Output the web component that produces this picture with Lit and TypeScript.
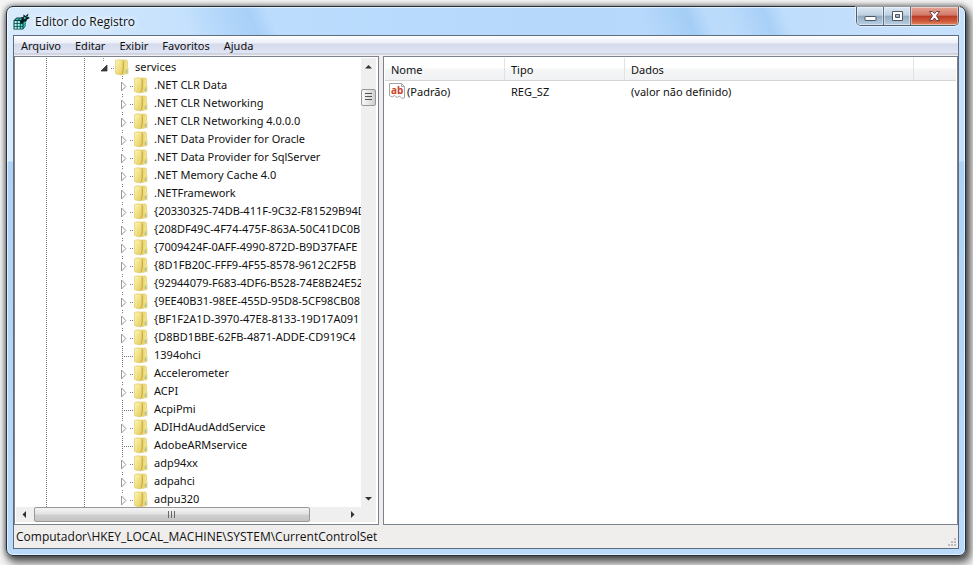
import { LitElement, html, css, svg, nothing } from "lit";
import { customElement, property } from "lit/decorators.js";

type NodeKind = "open" | "closed" | "leaf";

interface TreeNode {
  label: string;
  kind: NodeKind;
}

const branch = (label: string): TreeNode => ({ label, kind: "closed" });
const leaf = (label: string): TreeNode => ({ label, kind: "leaf" });

const SERVICES: TreeNode[] = [
  branch(".NET CLR Data"),
  branch(".NET CLR Networking"),
  branch(".NET CLR Networking 4.0.0.0"),
  branch(".NET Data Provider for Oracle"),
  branch(".NET Data Provider for SqlServer"),
  branch(".NET Memory Cache 4.0"),
  branch(".NETFramework"),
  branch("{20330325-74DB-411F-9C32-F81529B94D"),
  branch("{208DF49C-4F74-475F-863A-50C41DC0B"),
  branch("{7009424F-0AFF-4990-872D-B9D37FAFE"),
  branch("{8D1FB20C-FFF9-4F55-8578-9612C2F5B"),
  branch("{92944079-F683-4DF6-B528-74E8B24E52"),
  branch("{9EE40B31-98EE-455D-95D8-5CF98CB08"),
  branch("{BF1F2A1D-3970-47E8-8133-19D17A091"),
  branch("{D8BD1BBE-62FB-4871-ADDE-CD919C4"),
  leaf("1394ohci"),
  branch("Accelerometer"),
  branch("ACPI"),
  leaf("AcpiPmi"),
  branch("ADIHdAudAddService"),
  leaf("AdobeARMservice"),
  branch("adp94xx"),
  branch("adpahci"),
  branch("adpu320"),
];

const MENUS = ["Arquivo", "Editar", "Exibir", "Favoritos", "Ajuda"];

@customElement("tree-row")
class TreeRow extends LitElement {
  @property() label = "";
  @property() kind: NodeKind = "closed";
  @property({ type: Boolean }) nested = false;

  static styles = css`
    :host {
      display: flex;
      height: 18px;
      align-items: center;
      white-space: nowrap;
    }
    svg {
      display: block;
      flex: none;
    }
    .label {
      margin-left: 6px;
      line-height: 18px;
    }
  `;

  private guide(line: boolean) {
    return html`<svg width="19" height="18" aria-hidden="true">
      ${line
        ? svg`<path d="M7.5 0V18" stroke="#777" stroke-dasharray="1 1"/>`
        : nothing}
    </svg>`;
  }

  private joint() {
    if (this.kind === "open") {
      return html`<svg width="19" height="18" aria-hidden="true">
        <path d="M7.5 0V3M15 10.5h4" stroke="#888" stroke-dasharray="1 1" />
        <path d="M5 13L11 7V13Z" fill="#404040" stroke="#222" stroke-width=".7" />
      </svg>`;
    }
    if (this.kind === "leaf") {
      return html`<svg width="19" height="18" aria-hidden="true">
        <path d="M7.5 0V18M9 10.5H19" stroke="#777" stroke-dasharray="1 1" />
      </svg>`;
    }
    return html`<svg width="19" height="18" aria-hidden="true">
      <path d="M7.5 0V3M15 10.5h4" stroke="#777" stroke-dasharray="1 1" />
      <path d="M6.5 6L10.8 10.500L6.500 15Z" fill="#fff" stroke="#989898" />
    </svg>`;
  }

  private folder() {
    return html`<svg width="14" height="18" viewBox="0 0 14 18" aria-hidden="true">
      <defs>
        <linearGradient id="front" x1="0" x2="1" y1="0" y2="1">
          <stop offset="0" stop-color="#fdf6b4" />
          <stop offset="1" stop-color="#e4ca58" />
        </linearGradient>
        <linearGradient id="back" x1="0" x2="1">
          <stop offset="0" stop-color="#e0c757" />
          <stop offset="1" stop-color="#f6ea96" />
        </linearGradient>
      </defs>
      <path d="M6 3L7 2H11.500L12.500 3V9L13 10V15.500L8 16.500Z" fill="url(#back)" stroke="#dcc462" stroke-width=".6" />
      <path d="M10.800 11.500h1.600v3.500h-1.600z" fill="#7fa8a0" opacity=".6" />
      <path d="M.5 2.500Q3 1.600 5.500 1.800L8 3.200V12L6.500 17Q3 16.600.5 15.500Z" fill="url(#front)" stroke="#dcc55e" stroke-width=".6" />
      <path d="M8.300 3.500V12L7 16.700" fill="none" stroke="#bd9a36" stroke-width=".7" />
    </svg>`;
  }

  render() {
    const guides = this.nested
      ? [false, true, false, true, false]
      : [false, true, false, true];
    return html`
      ${guides.map((on) => this.guide(on))}${this.joint()}${this.folder()}
      <span class="label">${this.label}</span>
    `;
  }
}

@customElement("tree-view")
class TreeView extends LitElement {
  static styles = css`
    :host {
      display: block;
      min-width: 0;
      min-height: 0;
      overflow: hidden;
    }
    tree-row {
      margin-left: 4px;
    }
  `;

  render() {
    return html`
      <tree-row role="treeitem" aria-expanded="true" label="services" kind="open"></tree-row>
      ${SERVICES.map(
        (n) => html`<tree-row role="treeitem" label=${n.label} kind=${n.kind} nested></tree-row>`
      )}
    `;
  }
}

@customElement("app-root")
class AppRoot extends LitElement {
  static styles = css`
    :host {
      display: flex;
      box-sizing: border-box;
      height: 100vh;
      min-height: 320px;
      padding: 6px 7px 9px 6px;
      overflow: hidden;
      background: #f4f4f4;
      font-family: "Noto Sans", "Open Sans", sans-serif;
      font-size: 11px;
      color: #111;
    }
    button {
      font: inherit;
      color: inherit;
      border: 0;
      padding: 0;
      margin: 0;
      background: none;
    }
    svg {
      display: block;
    }
    .window {
      flex: 1;
      min-width: 0;
      display: flex;
      flex-direction: column;
      box-sizing: border-box;
      padding: 0 6px 6px;
      border: 1px solid #22303c;
      border-radius: 7px;
      background:
        linear-gradient(68deg, transparent 19%, #a8d0f8 26%, transparent 28%, transparent 66%, #a4cef6 71%, transparent 73%, transparent 75%, #a8d0f7 79%, transparent 81%) 0 0 / 100% 29px no-repeat,
        linear-gradient(transparent 154px, #aed2f6 155px, #b9dafa) 0 0 / 100% 100% no-repeat,
        linear-gradient(90deg, #d9ebfc, #bbdcfd 28%, #b5d8fb 60%, #c7e1fc);
      box-shadow:
        inset 0 0 0 1px rgba(255, 255, 255, 0.6),
        0 0 5px 1px rgba(0, 0, 0, 0.4),
        3px 5px 9px 2px rgba(0, 0, 0, 0.6);
    }
    .title {
      flex: none;
      height: 28px;
      display: flex;
      align-items: flex-start;
    }
    .caption {
      display: flex;
      align-items: center;
      gap: 5px;
      flex: 1;
      height: 28px;
      margin: 0;
      font-size: 12px;
      font-weight: 400;
      font-family: "Open Sans", "Noto Sans", sans-serif;
      text-shadow: 0 0 6px #fff, 0 0 6px #fff;
    }
    .controls {
      display: flex;
      height: 19px;
      box-sizing: border-box;
      border: 1px solid #4d5f70;
      border-top: 0;
      border-radius: 0 0 5px 5px;
      overflow: hidden;
      box-shadow: 0 0 0 1px rgba(255, 255, 255, 0.5);
    }
    .controls button {
      width: 27px;
      display: flex;
      align-items: center;
      justify-content: center;
      background: linear-gradient(#dce8f4, #bfd0e1 46%, #93a9bf 50%, #b9cfe4);
      border-right: 1px solid #5d6f80;
      box-shadow: inset 0 0 0 1px rgba(255, 255, 255, 0.45);
    }
    .controls .close {
      width: 47px;
      border-right: 0;
      background: linear-gradient(#e6a797, #d27767 46%, #b93822 50%, #cf5c3c 80%, #e08b62);
    }
    .client {
      flex: 1;
      min-height: 0;
      display: flex;
      flex-direction: column;
      border: 1px solid #5e6c7d;
      background: #f0eeed;
    }
    .menu {
      flex: none;
      display: flex;
      height: 20px;
      box-sizing: border-box;
      background: linear-gradient(#fff, #eceff8 7px, #d6dbec 8px, #e0e5f5 17px, #b9bfd0 18px, #f0f0f0 19px);
    }
    .menu button {
      padding: 0 7px;
      line-height: 20px;
    }
    .panes {
      flex: 1;
      min-height: 0;
      display: grid;
      grid-template-columns: 365px minmax(0, 1fr);
      grid-template-rows: minmax(0, 1fr);
      column-gap: 4px;
    }
    .pane {
      box-sizing: border-box;
      border: 1px solid #7c828c;
      background: #fff;
    }
    .tree {
      display: grid;
      grid-template-columns: minmax(0, 1fr) 15px;
      grid-template-rows: minmax(0, 1fr) 15px;
      padding: 1px 2px 2px 1px;
    }
    .bar {
      display: flex;
      background: #efefef;
    }
    .bar button {
      display: flex;
      align-items: center;
      justify-content: center;
    }
    .vertical {
      flex-direction: column;
    }
    .vertical button {
      height: 17px;
    }
    .horizontal {
      grid-column: 1 / -1;
      padding-right: 15px;
    }
    .horizontal button {
      width: 17px;
    }
    .room {
      flex: 1;
    }
    .thumb {
      box-sizing: border-box;
      display: flex;
      align-items: center;
      justify-content: center;
      border: 1px solid #989898;
      border-radius: 2px;
    }
    .vertical .thumb {
      height: 17px;
      margin-top: 14px;
      background: linear-gradient(90deg, #f6f6f6, #e6e6e6 50%, #cfcfcf);
    }
    .horizontal .thumb {
      width: 80%;
      margin-left: 1px;
      background: linear-gradient(#f4f4f4, #e3e3e3 48%, #d0d0d0 52%, #c4c4c4);
    }
    .values {
      padding: 1px;
      overflow: hidden;
    }
    table {
      width: 100%;
      table-layout: fixed;
      border-collapse: separate;
      border-spacing: 0;
    }
    th,
    td {
      padding: 0 0 0 6px;
      text-align: left;
      font-weight: 400;
      white-space: nowrap;
    }
    th {
      height: 22px;
      border-bottom: 1px solid #d5d5d5;
      border-right: 1px solid #e0e3e6;
      background: linear-gradient(#fff 45%, #f5f6f7 50%, #f1f2f3);
    }
    th:last-child {
      border-right: 0;
    }
    td {
      height: 20px;
    }
    .key {
      width: 113px;
    }
    .data {
      width: 282px;
    }
    td.entry {
      padding-left: 4px;
    }
    .value {
      display: flex;
      align-items: center;
      gap: 2px;
    }
    .status {
      flex: none;
      height: 23px;
      display: flex;
      align-items: center;
      justify-content: space-between;
      padding-left: 2px;
      background: #f0eeed;
    }
    .path {
      font-family: "Open Sans", "Noto Sans", sans-serif;
      font-size: 12px;
      line-height: 23px;
    }
    .grip {
      align-self: flex-end;
    }
  `;

  private appIcon() {
    return html`<svg width="17" height="17" viewBox="0 0 17 17" aria-hidden="true">
      <path d="M.5 7.500L3.500 4.500H10V6L13 7V12.500L10 16.500H.5Z" fill="#0b3d3d" />
      <path d="M1.500 8h2.200v2.200H1.500zM4.600 8h2.200v2.200H4.600zM1.500 11h2.200v2.200H1.500zM4.600 11h2.200v2.200H4.600zM1.500 14h2.200v1.700H1.500zM4.600 14h2.200v1.700H4.600z" fill="#9ff7f0" />
      <path d="M7.700 11h1.800v2.200H7.700zM7.700 14h1.800v1.700H7.700zM3.700 5.400h2.200l-.9 1.400H2.500zM7 5.400h2l-.8 1.400H6z" fill="#4fe0d8" />
      <path d="M10.500 9L13 7V12L10.500 15.500Z" fill="#0b8d8a" />
      <path d="M7 9L9 6.500L8 4L10.200 4.500L10.500 1.500L12.500 3L15.500.5L14.800 3.500L16.800 5L14 6.500L13 9L11 8L9 10Z" fill="#061d1d" />
      <path d="M10.500 5l1.500-1.200 1 1.200-1.500 1.200zM13.500 3.500l1-.7.3 1-1 .7z" fill="#4edbd6" />
      <path d="M10.500 11l2.300-2M10.500 13.500l2.300-2" stroke="#9ff4ee" stroke-width=".7" />
    </svg>`;
  }

  private arrow(d: string) {
    return html`<svg width="9" height="9" viewBox="0 0 9 9" aria-hidden="true"><path d=${d} fill="#333" /></svg>`;
  }

  render() {
    return html`
      <section class="window">
        <header class="title">
          <h1 class="caption">${this.appIcon()}<span>Editor do Registro</span></h1>
          <div class="controls">
            <button aria-label="Minimizar">
              <svg width="13" height="12"><rect x="1" y="6.500" width="11" height="4" rx=".5" fill="#fff" stroke="#4b5663" /></svg>
            </button>
            <button aria-label="Maximizar">
              <svg width="13" height="12"><path d="M1.500 1.500h10v9h-10zM4.500 4.500v3h4v-3z" fill="#fff" fill-rule="evenodd" stroke="#4b5663" /></svg>
            </button>
            <button class="close" aria-label="Fechar">
              <svg width="13" height="12"><path d="M1.500 1.500H4.500L6.500 3.700L8.500 1.500H11.500L8.500 5.800L11.500 10.500H8.500L6.500 8L4.500 10.500H1.500L4.500 5.800Z" fill="#fff" stroke="#53343a" stroke-width=".9" /></svg>
            </button>
          </div>
        </header>
        <div class="client">
          <nav class="menu">${MENUS.map((m) => html`<button>${m}</button>`)}</nav>
          <main class="panes">
            <div class="pane tree">
              <tree-view role="tree"></tree-view>
              <div class="bar vertical">
                <button aria-label="Rolar para cima">${this.arrow("M1 6.500L4.500 3L8 6.500Z")}</button>
                <div class="thumb">
                  <svg width="8" height="9"><path d="M0 .5h7M0 3.500h7M0 6.500h7" stroke="#555" /></svg>
                </div>
                <span class="room"></span>
                <button aria-label="Rolar para baixo">${this.arrow("M1 3L4.500 6.500L8 3Z")}</button>
              </div>
              <div class="bar horizontal">
                <button aria-label="Rolar para a esquerda">${this.arrow("M6 1L2.500 4.500L6 8Z")}</button>
                <div class="thumb">
                  <svg width="9" height="8"><path d="M.5 0v7M3.500 0v7M6.500 0v7" stroke="#666" /></svg>
                </div>
                <span class="room"></span>
                <button aria-label="Rolar para a direita">${this.arrow("M3 1L6.500 4.500L3 8Z")}</button>
              </div>
            </div>
            <div class="pane values">
              <table>
                <thead>
                  <tr>
                    <th class="key">Nome</th>
                    <th class="key">Tipo</th>
                    <th class="data">Dados</th>
                    <th aria-hidden="true"></th>
                  </tr>
                </thead>
                <tbody>
                  <tr>
                    <td class="entry">
                      <div class="value">
                        <svg width="16" height="16" viewBox="0 0 16 16" aria-hidden="true">
                          <path d="M.5.5H12.500L15.500 3.500V14.500L13 15.500L10.500 13L8 14.500L5.500 12.500L3 14L.5 12.500Z" fill="#fff" stroke="#a3a3a3" />
                          <path d="M12.500.5V3.500H15.500" fill="none" stroke="#a3a3a3" />
                          <text x="2" y="11" font-size="10" font-weight="700" fill="#c8432b">ab</text>
                        </svg>
                        <span>(Padrão)</span>
                      </div>
                    </td>
                    <td>REG_SZ</td>
                    <td>(valor não definido)</td>
                    <td></td>
                  </tr>
                </tbody>
              </table>
            </div>
          </main>
          <footer class="status">
            <span class="path">Computador\\HKEY_LOCAL_MACHINE\\SYSTEM\\CurrentControlSet</span>
            <svg class="grip" width="12" height="12" aria-hidden="true">
              <path d="M8 2h2v2H8zM8 5h2v2H8zM8 8h2v2H8zM5 5h2v2H5zM5 8h2v2H5zM2 8h2v2H2z" fill="#bdbbc0" />
            </svg>
          </footer>
        </div>
      </section>
    `;
  }
}
